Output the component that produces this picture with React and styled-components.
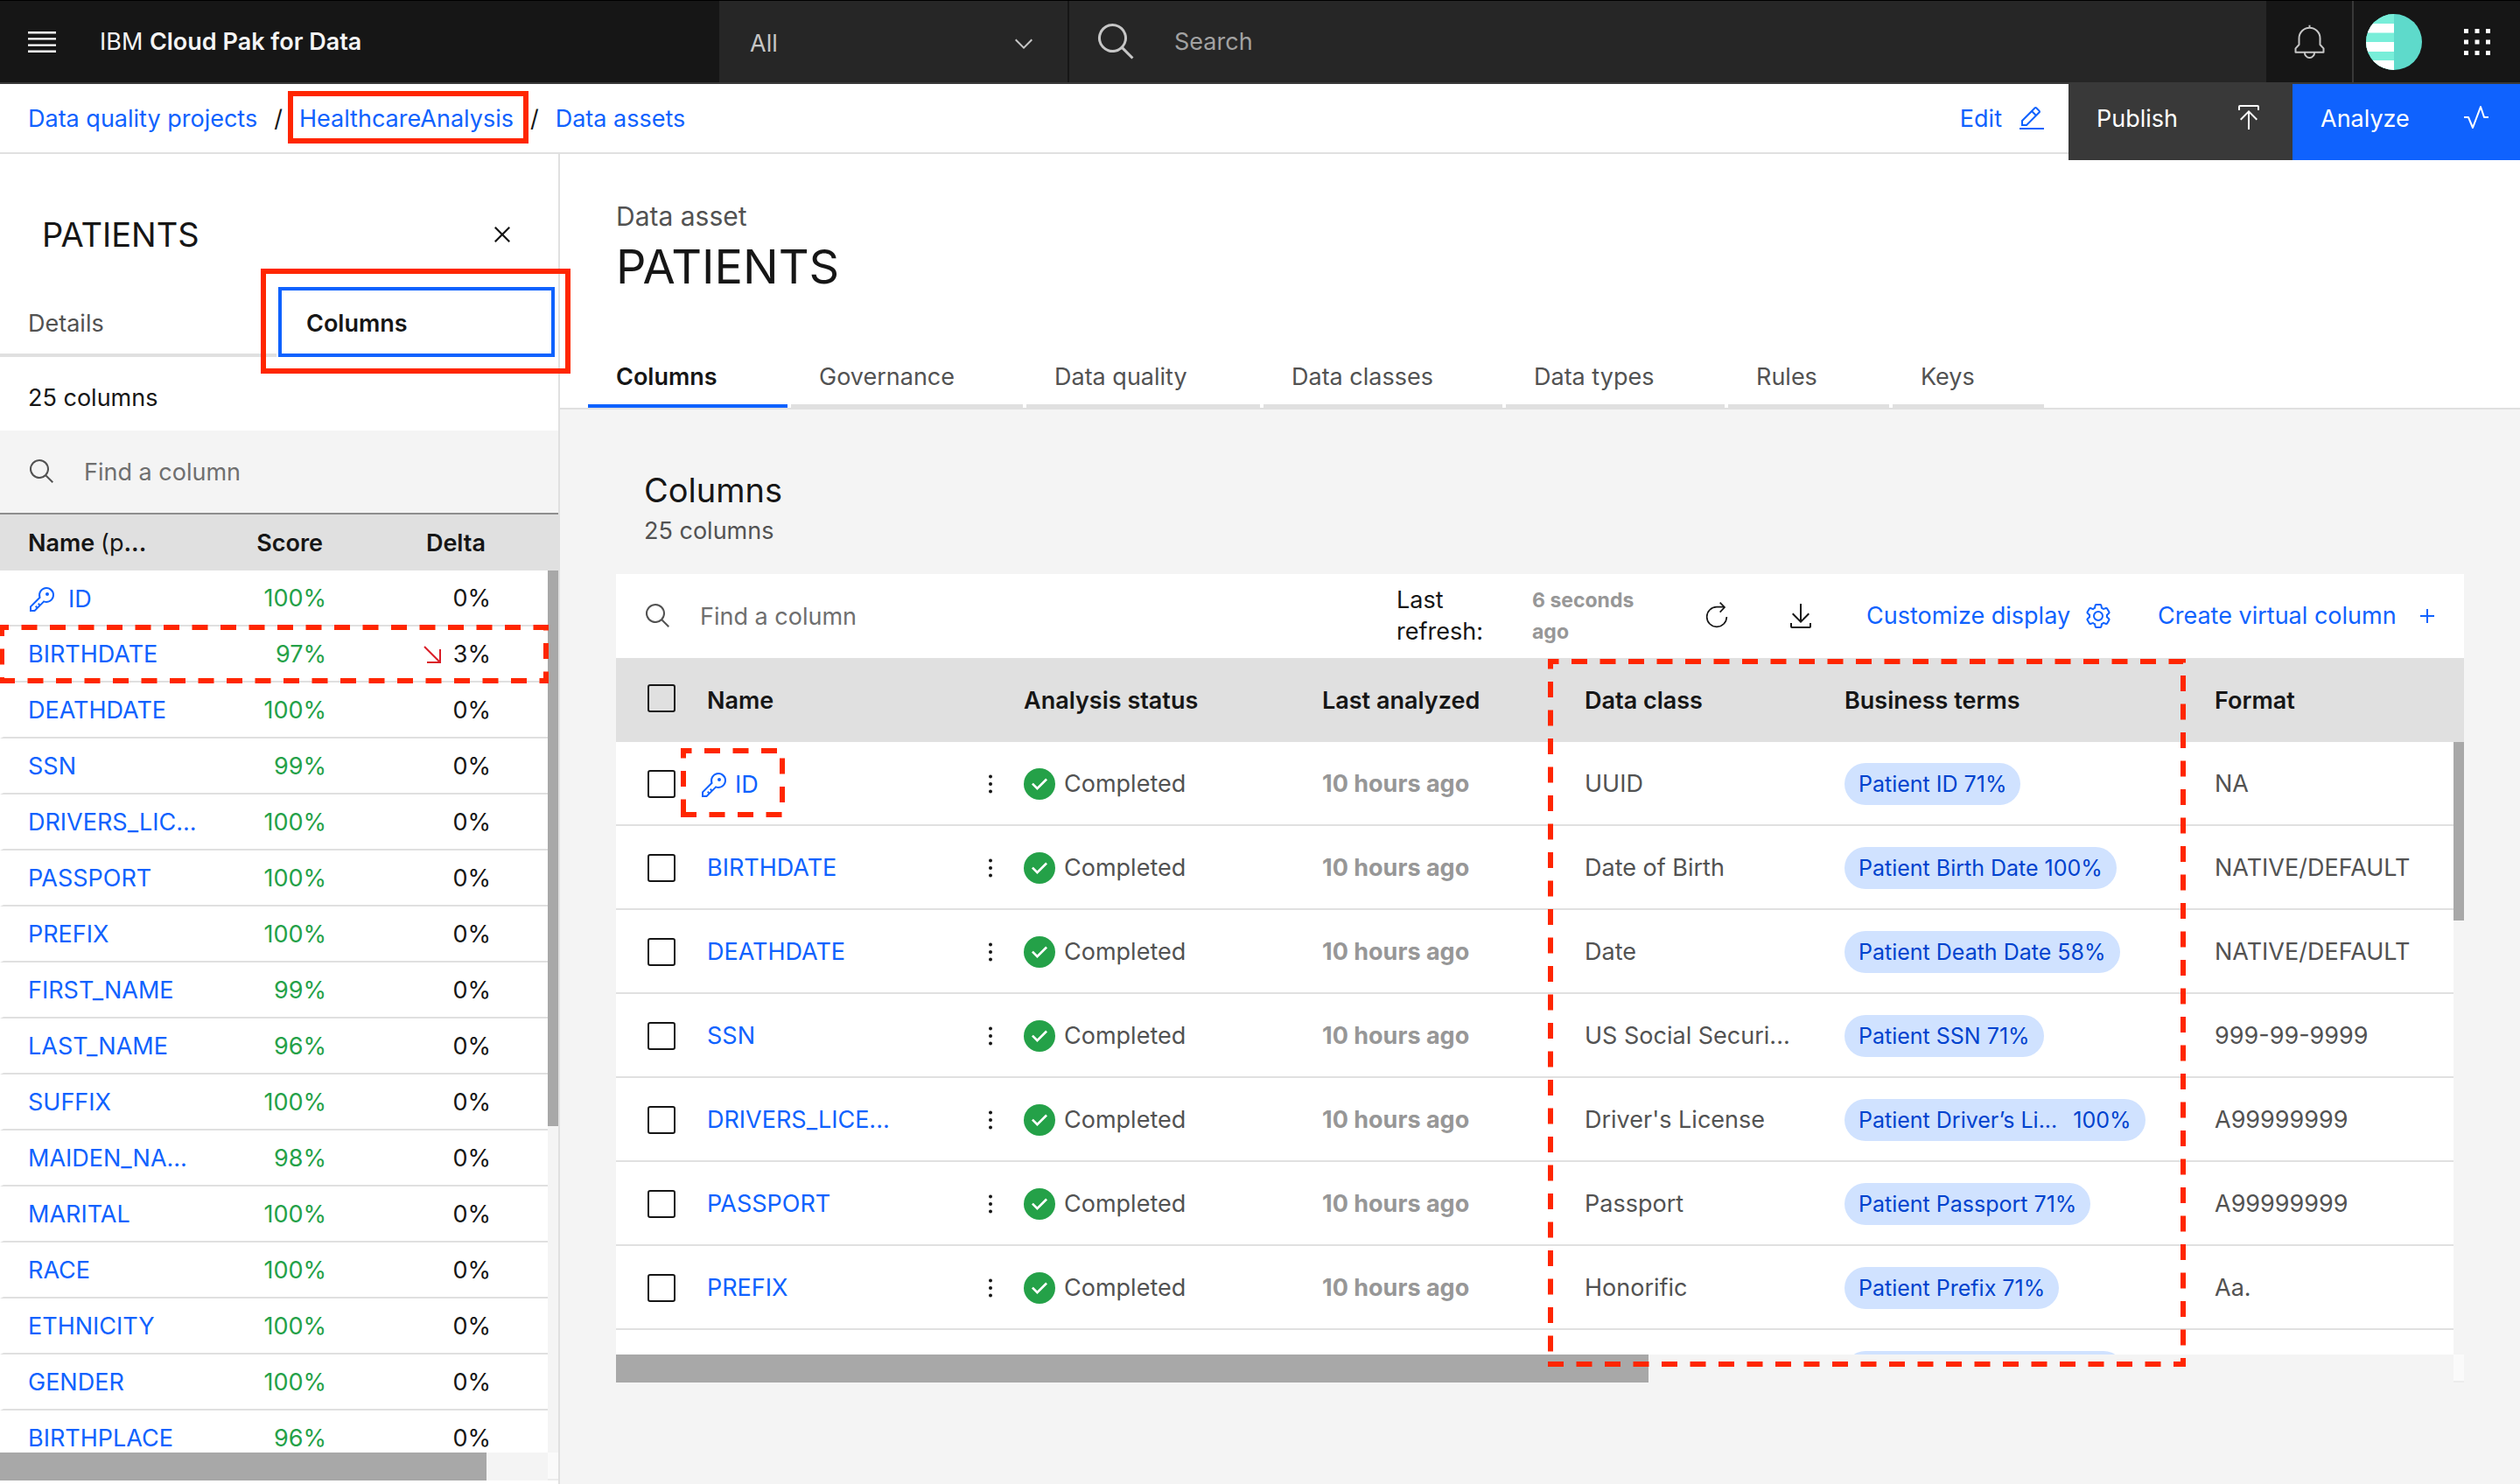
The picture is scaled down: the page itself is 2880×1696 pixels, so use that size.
import React from "react";
import styled, { createGlobalStyle } from "styled-components";

const c = {
  ink: "#161616",
  muted: "#525252",
  placeholder: "#6f6f6f",
  faded: "#979797",
  blue: "#0f62fe",
  green: "#24a148",
  line: "#e0e0e0",
  layer: "#f4f4f4",
  thumb: "#a8a8a8",
  mark: "#ff2600",
};

const Global = createGlobalStyle`
  *, *::before, *::after { box-sizing: border-box; }
  body { margin: 0; background: #fff; }
  button, input, select { font: inherit; color: inherit; border: 0; border-radius: 0; background: none; padding: 0; margin: 0; outline: none; }
  button { cursor: pointer; text-align: left; }
  a { color: ${c.blue}; text-decoration: none; }
  h1, h2, p { margin: 0; font-weight: 400; }
  svg { display: block; flex: none; }
`;

/* ---------- icons ---------- */

const paths = {
  search:
    "M29,27.5859l-7.5521-7.5521a11.0177,11.0177,0,1,0-1.4141,1.4141L27.5859,29ZM4,13a9,9,0,1,1,9,9A9.01,9.01,0,0,1,4,13Z",
  chevron: "M16 22L6 12 7.4 10.6 16 19.2 24.6 10.6 26 12z",
  edit:
    "M2 26H30V28H2zM25.4 9c.8-.8.8-2 0-2.8l-3.6-3.6c-.8-.8-2-.8-2.8 0l-15 15V24h6.4L25.4 9zM20.4 4L24 7.6l-3 3L17.4 7 20.4 4zM6 22v-3.6l10-10 3.6 3.6-10 10H6z",
  publish:
    "M6 18 7.41 19.41 15 11.83 15 30 17 30 17 11.83 24.59 19.41 26 18 16 8 6 18zM6,8V4H26V8h2V4a2,2,0,0,0-2-2H6A2,2,0,0,0,4,4V8Z",
  activity:
    "M12,29a1,1,0,0,1-.92-.62L6.33,17H2V15H7a1,1,0,0,1,.92.62L12,25.28,20.06,3.65A1,1,0,0,1,21,3a1,1,0,0,1,.93.68L25.72,15H30v2H25a1,1,0,0,1-.95-.68L21,7,12.94,28.35A1,1,0,0,1,12,29Z",
  close:
    "M24 9.4L22.6 8 16 14.6 9.4 8 8 9.4 14.6 16 8 22.6 9.4 24 16 17.4 22.6 24 24 22.6 17.4 16 24 9.4z",
  download:
    "M26,24v4H6V24H4v4a2,2,0,0,0,2,2H26a2,2,0,0,0,2-2V24ZM26 14 24.59 12.59 17 20.17 17 2 15 2 15 20.17 7.41 12.59 6 14 16 24 26 14z",
  add: "M17 15V8H15V15H8V17H15V24H17V17H24V15z",
  key:
    "M21,2a8.9977,8.9977,0,0,0-8.6119,11.6118L2,24v6H8L18.3881,19.6118A9,9,0,1,0,21,2Zm0,16a7.0125,7.0125,0,0,1-2.0322-.3022L17.821,17.35l-.8472.8472-3.1811,3.1812L12.4141,20,11,21.4141l1.3787,1.3786-1.5859,1.586L9.4141,23,8,24.4141l1.3787,1.3786L7.1716,28H4V24.8284l9.8023-9.8023.8472-.8474-.3473-1.1467A7,7,0,1,1,21,18ZM24,10a2,2,0,1,1-4,0a2,2,0,0,1,4,0Z",
  gear:
    "M27,16.76c0-.25,0-.5,0-.76s0-.51,0-.77l1.92-1.68A2,2,0,0,0,29.3,11L26.94,7a2,2,0,0,0-1.73-1,2,2,0,0,0-.64.1l-2.43.82a11.35,11.35,0,0,0-1.31-.75l-.51-2.52a2,2,0,0,0-2-1.61H13.64a2,2,0,0,0-2,1.61l-.51,2.52a11.48,11.48,0,0,0-1.32.75L7.43,6.06A2,2,0,0,0,6.79,6,2,2,0,0,0,5.06,7L2.7,11a2,2,0,0,0,.41,2.51L5,15.24c0,.25,0,.5,0,.76s0,.51,0,.77L3.11,18.45A2,2,0,0,0,2.7,21L5.06,25a2,2,0,0,0,1.73,1,2,2,0,0,0,.64-.1l2.43-.82a11.35,11.35,0,0,0,1.31.75l.51,2.52a2,2,0,0,0,2,1.61h4.72a2,2,0,0,0,2-1.61l.51-2.52a11.48,11.48,0,0,0,1.32-.75l2.42.82a2,2,0,0,0,.64.1,2,2,0,0,0,1.73-1L29.3,21a2,2,0,0,0-.41-2.51ZM25.21,24l-3.43-1.16a8.86,8.86,0,0,1-2.71,1.57L18.36,28H13.64l-.71-3.55a9.36,9.36,0,0,1-2.7-1.57L6.79,24,4.43,20l2.72-2.4a8.9,8.9,0,0,1,0-3.13L4.43,12,6.79,8l3.43,1.16a8.86,8.86,0,0,1,2.71-1.57L13.64,4h4.72l.71,3.55a9.36,9.36,0,0,1,2.7,1.57L25.21,8,27.57,12l-2.72,2.4a8.9,8.9,0,0,1,0,3.13L27.57,20ZM16,22a6,6,0,1,1,6-6A5.94,5.94,0,0,1,16,22Zm0-10a3.91,3.91,0,0,0-4,4,3.91,3.91,0,0,0,4,4,3.91,3.91,0,0,0,4-4A3.91,3.91,0,0,0,16,12Z",
};

const Icon = ({ name, size = 32 }) => (
  <svg width={size} height={size} viewBox="0 0 32 32" fill="currentColor" fillRule="evenodd" aria-hidden="true">
    <path d={paths[name]} />
  </svg>
);

const MenuIcon = () => (
  <svg width="32" height="24" viewBox="0 0 32 24" fill="#fff" aria-hidden="true">
    <path d="M0 0h32v2.4H0zM0 7.2h32v2.4H0zM0 14.4h32v2.4H0zM0 21.6h32V24H0z" />
  </svg>
);

const BellIcon = () => (
  <svg width="39" height="42" viewBox="0 0 116 126" fill="none" stroke="#c6c6c6" strokeWidth="6" aria-hidden="true">
    <path d="M58 5v9M22 72V50a36 36 0 0 1 72 0v22l12 13v13H10V85zM41 98a17 19 0 0 0 34 0" strokeLinejoin="round" />
  </svg>
);

const Avatar = () => (
  <svg width="64" height="64" viewBox="0 0 64 64" aria-hidden="true">
    <defs>
      <clipPath id="avatar">
        <circle cx="32" cy="32" r="32" />
      </clipPath>
    </defs>
    <g clipPath="url(#avatar)">
      <path fill="#5edacb" d="M0 0h64v64H0z" />
      <path fill="#78eed9" d="M0 0h32v64H0z" />
      <path fill="#fff" d="M0 11h32v10.500H0zM0 32h32v11H0zM0 53h32v11H0z" />
    </g>
  </svg>
);

const GridIcon = () => (
  <svg width="30" height="30" viewBox="0 0 30 30" fill="#fff" aria-hidden="true">
    {[0, 12.5, 25].map((y) => [0, 12.5, 25].map((x) => <rect key={`${x}-${y}`} x={x} y={y} width="5" height="5" />))}
  </svg>
);

const RefreshIcon = () => (
  <svg width="32" height="32" viewBox="0 0 96 96" fill="none" stroke="currentColor" strokeWidth="5" aria-hidden="true">
    <path d="M82 51A34 34 0 1 1 48 17H74M59 2L75 18 59 35" />
  </svg>
);

const DotsIcon = () => (
  <svg width="4" height="22" viewBox="0 0 4 22" fill={c.ink} aria-hidden="true">
    <circle cx="2" cy="2.500" r="2" />
    <circle cx="2" cy="11" r="2" />
    <circle cx="2" cy="19.500" r="2" />
  </svg>
);

const CheckIcon = () => (
  <svg width="36" height="36" viewBox="2 2 28 28" aria-hidden="true">
    <circle cx="16" cy="16" r="14" fill={c.green} />
    <path fill="#fff" d="M14 21.4142L9 16.4141 10.4141 15 14 18.5858 21.5859 11 23 12.4142z" />
  </svg>
);

const DownArrow = () => (
  <svg width="20" height="20" viewBox="0 0 20 20" fill="none" stroke="#da1e28" strokeWidth="2" aria-label="down">
    <path d="M1 1L18 18M19 4V19H4" />
  </svg>
);

/* ---------- page frame ---------- */

const Page = styled.div`
  display: flex;
  flex-direction: column;
  height: 100vh;
  overflow: hidden;
  font-family: Inter, "Liberation Sans", sans-serif;
  font-size: 27px;
  line-height: 36px;
  color: ${c.ink};
`;

const Header = styled.header`
  display: flex;
  flex: none;
  height: 96px;
  border-top: 1px solid #000;
  border-bottom: 2px solid #393939;
  background: ${c.ink};
`;

const Brand = styled.div`
  display: flex;
  align-items: center;
  gap: 50px;
  width: 822px;
  padding-left: 32px;
  color: #f4f4f4;
  strong { font-weight: 600; }
`;

const Scope = styled.label`
  display: grid;
  align-items: center;
  width: 400px;
  padding-top: 4px;
  background: #262626;
  border-right: 2px solid ${c.ink};
  color: #c6c6c6;
  & > * { grid-area: 1 / 1; }
  svg { justify-self: end; margin-right: 34px; pointer-events: none; }
  select { appearance: none; width: 100%; height: 60px; padding-left: 35px; }
`;

const GlobalSearch = styled.label`
  display: flex;
  align-items: center;
  flex: 1;
  gap: 42px;
  padding-left: 30px;
  background: #262626;
  color: #c6c6c6;
  input { flex: 1; }
  input::placeholder { color: #a2a2a2; opacity: 1; }
`;

const HeaderButton = styled.button`
  display: grid;
  place-items: center;
  width: ${(p) => p.$w}px;
  border-left: ${(p) => (p.$divided ? "2px solid #393939" : "0")};
`;

const SubBar = styled.div`
  display: flex;
  flex: none;
  align-items: flex-start;
  height: 80px;
  border-bottom: 2px solid ${c.line};
`;

const Crumbs = styled.nav`
  display: flex;
  flex: 1;
  align-items: center;
  gap: 19px;
  height: 78px;
  padding: 2px 0 0 32px;
`;

const Crumb = styled.a`
  position: relative;
`;

const EditButton = styled.button`
  display: flex;
  align-items: center;
  gap: 18px;
  height: 78px;
  padding: 2px 26px 0 0;
  color: ${c.blue};
`;

const ActionButton = styled.button`
  position: relative;
  display: flex;
  justify-content: space-between;
  width: ${(p) => p.$w}px;
  height: 87px;
  padding: 22px 34px 0 32px;
  background: ${(p) => (p.$primary ? c.blue : "#393939")};
  color: #fff;
`;

const Body = styled.div`
  display: flex;
  flex: 1;
  min-height: 0;
`;

/* ---------- marks over the page ---------- */

const SolidMark = styled.span`
  position: absolute;
  inset: ${(p) => p.$inset};
  border: 6px solid ${c.mark};
  pointer-events: none;
  z-index: 2;
`;

const DashSvg = styled.svg`
  position: absolute;
  left: ${(p) => p.$x}px;
  top: ${(p) => p.$y}px;
  overflow: visible;
  pointer-events: none;
  z-index: 3;
`;

const DashedMark = ({ x, y, w, h }) => (
  <DashSvg $x={x} $y={y} width={w} height={h} aria-hidden="true">
    <path
      d={`M0 ${h - 3}H${w - 3}V3H3V${h}`}
      fill="none"
      stroke={c.mark}
      strokeWidth="6"
      strokeDasharray="18 14.5"
    />
  </DashSvg>
);

/* ---------- side panel ---------- */

const Panel = styled.aside`
  display: flex;
  flex-direction: column;
  flex: none;
  width: 640px;
  padding-bottom: 4px;
  border-right: 2px solid ${c.line};
`;

const PanelHead = styled.div`
  display: flex;
  align-items: center;
  justify-content: space-between;
  flex: none;
  height: 152px;
  padding: 32px 46px 0 48px;
`;

const PanelTitle = styled.h2`
  font-size: 38px;
  line-height: 48px;
`;

const PanelTabs = styled.div`
  display: grid;
  grid-template-columns: 316px 316px;
  gap: 2px;
  flex: none;
  height: 80px;
`;

const PanelTab = styled.button`
  position: relative;
  padding: 4px 0 0 32px;
  color: ${(p) => (p.$active ? c.ink : c.muted)};
  font-weight: ${(p) => (p.$active ? 600 : 400)};
  box-shadow: ${(p) => (p.$active ? `inset 0 0 0 4px ${c.blue}` : `inset 0 -4px 0 ${c.line}`)};
`;

const PanelCount = styled.p`
  flex: none;
  height: 84px;
  padding: 29px 0 0 32px;
`;

const FindField = styled.label`
  display: flex;
  align-items: center;
  flex: none;
  gap: 32px;
  height: 96px;
  padding-left: 32px;
  color: ${c.muted};
  input { width: 400px; padding-top: 2px; }
  input::placeholder { color: ${c.placeholder}; opacity: 1; }
`;

const PanelFind = styled(FindField)`
  background: ${c.layer};
  border-bottom: 2px solid #8d8d8d;
`;

const PanelList = styled.div`
  position: relative;
  flex: 1;
  min-height: 0;
  overflow: hidden;
`;

const ScoreTable = styled.table`
  width: 100%;
  table-layout: fixed;
  border-collapse: separate;
  border-spacing: 0;
  th, td { height: 64px; padding: 2px 0 0; text-align: right; white-space: nowrap; font-weight: 400; }
  thead th { background: ${c.line}; font-weight: 600; padding-right: 83px; }
  thead th:first-child { text-align: left; padding: 2px 0 0 32px; }
  thead th:nth-child(2) { padding-right: 4px; }
  thead span { font-weight: 400; }
  tbody th, tbody td { border-bottom: 2px solid ${c.line}; }
  tbody th { text-align: left; border-left: 4px solid #fff; padding-left: 28px; }
  tbody td:nth-child(2) { color: ${c.green}; }
  tbody td:last-child { padding-right: 77px; }
`;

const Delta = styled.span`
  display: inline-flex;
  align-items: center;
  gap: 14px;
`;

const KeyLink = styled.a`
  position: relative;
  display: inline-flex;
  align-items: center;
  gap: ${(p) => (p.$compact ? 8 : 14)}px;
  margin-left: ${(p) => (p.$compact ? -8 : 0)}px;
  vertical-align: middle;
`;

const VTrack = styled.div`
  position: absolute;
  top: ${(p) => p.$top}px;
  right: 0;
  bottom: 0;
  width: 12px;
  background: ${c.layer};
`;

const VThumb = styled.div`
  height: ${(p) => p.$h}px;
  background: ${c.thumb};
`;

const HTrack = styled.div`
  display: flex;
  flex: none;
  height: 32px;
  background: ${c.layer};
`;

const HThumb = styled.div`
  width: ${(p) => p.$w}px;
  background: ${c.thumb};
`;

const Corner = styled.div`
  width: 12px;
  margin-left: auto;
  background: #fafafa;
  border-bottom: 2px solid #ececec;
`;

/* ---------- main ---------- */

const Main = styled.main`
  flex: 1;
  min-width: 0;
  background: ${c.layer};
`;

const Hero = styled.div`
  padding: 51px 32px 0;
  background: #fff;
  border-bottom: 2px solid ${c.line};
`;

const Kind = styled.p`
  padding-left: 32px;
  font-size: 30px;
  line-height: 40px;
  color: ${c.muted};
`;

const Title = styled.h1`
  padding-left: 32px;
  font-size: 54px;
  line-height: 76px;
`;

const Tabs = styled.div`
  display: flex;
  gap: 4px;
  margin-top: 55px;
`;

const Tab = styled.button`
  width: ${(p) => p.$w}px;
  height: 68px;
  padding: 2px 0 0 32px;
  white-space: nowrap;
  border-bottom: 4px solid ${(p) => (p.$active ? c.blue : c.line)};
  color: ${(p) => (p.$active ? c.ink : c.muted)};
  font-weight: ${(p) => (p.$active ? 600 : 400)};
`;

const Section = styled.section`
  padding: 68px 64px 0;
`;

const SectionTitle = styled.h2`
  padding-left: 32px;
  font-size: 38px;
  line-height: 48px;
`;

const SectionCount = styled.p`
  margin: 5px 0 31px;
  padding-left: 32px;
  color: ${c.muted};
`;

const Card = styled.div`
  position: relative;
  background: #fff;
`;

const Toolbar = styled.div`
  display: grid;
  grid-template-columns: 1fr 155px 195px 96px 91px 333px 350px;
  align-items: center;
  height: 96px;
`;

const RefreshLabel = styled.span`
  width: 110px;
`;

const RefreshTime = styled.span`
  width: 130px;
  font-size: 23px;
  font-weight: 700;
  color: ${c.faded};
`;

const IconButton = styled.button`
  display: block;
  justify-self: start;
`;

const LinkButton = styled.button`
  display: flex;
  align-items: center;
  justify-content: space-between;
  width: ${(p) => p.$w}px;
  white-space: nowrap;
  color: ${c.blue};
`;

const TableArea = styled.div`
  position: relative;
  height: 796px;
  overflow: hidden;
`;

const DataTable = styled.table`
  width: 100%;
  table-layout: fixed;
  border-collapse: separate;
  border-spacing: 0;
  th, td { height: 96px; padding: 2px 0 0; text-align: left; font-weight: 400; white-space: nowrap; }
  thead th { background: ${c.line}; font-weight: 600; }
  thead th:first-child { padding: 0 0 4px; }
  tbody th, tbody td { border-bottom: 2px solid ${c.line}; color: ${c.muted}; }
`;

const Check = styled.input`
  appearance: none;
  display: block;
  width: 32px;
  height: 32px;
  margin-left: 36px;
  border: 2px solid ${c.ink};
  border-radius: 3px;
`;

const Status = styled.span`
  display: flex;
  align-items: center;
  gap: 10px;
`;

const Ago = styled.span`
  font-weight: 700;
  color: ${c.faded};
`;

const Pill = styled.span`
  display: inline-flex;
  align-items: center;
  gap: 18px;
  height: 48px;
  min-width: ${(p) => p.$min || 0}px;
  padding: 0 16px;
  border-radius: 24px;
  background: #d0e2ff;
  color: #0043ce;
  font-size: 25px;
  vertical-align: middle;
`;

/* ---------- data ---------- */

const scores = [
  ["ID", 100, 0],
  ["BIRTHDATE", 97, 3],
  ["DEATHDATE", 100, 0],
  ["SSN", 99, 0],
  ["DRIVERS_LIC...", 100, 0],
  ["PASSPORT", 100, 0],
  ["PREFIX", 100, 0],
  ["FIRST_NAME", 99, 0],
  ["LAST_NAME", 96, 0],
  ["SUFFIX", 100, 0],
  ["MAIDEN_NA...", 98, 0],
  ["MARITAL", 100, 0],
  ["RACE", 100, 0],
  ["ETHNICITY", 100, 0],
  ["GENDER", 100, 0],
  ["BIRTHPLACE", 96, 0],
];

const tabs = [
  ["Columns", 228],
  ["Governance", 265],
  ["Data quality", 267],
  ["Data classes", 273],
  ["Data types", 250],
  ["Rules", 184],
  ["Keys", 173],
];

const rows = [
  ["ID", "UUID", ["Patient ID 71%"], "NA"],
  ["BIRTHDATE", "Date of Birth", ["Patient Birth Date 100%"], "NATIVE/DEFAULT"],
  ["DEATHDATE", "Date", ["Patient Death Date 58%"], "NATIVE/DEFAULT"],
  ["SSN", "US Social Securi...", ["Patient SSN 71%"], "999-99-9999"],
  ["DRIVERS_LICE...", "Driver's License", ["Patient Driver’s Li...", "100%"], "A99999999"],
  ["PASSPORT", "Passport", ["Patient Passport 71%"], "A99999999"],
  ["PREFIX", "Honorific", ["Patient Prefix 71%"], "Aa."],
];

const SidePanel = () => (
  <Panel>
    <PanelHead>
      <PanelTitle>PATIENTS</PanelTitle>
      <button aria-label="Close">
        <Icon name="close" size={36} />
      </button>
    </PanelHead>
    <PanelTabs>
      <PanelTab>Details</PanelTab>
      <PanelTab $active>
        Columns
        <SolidMark $inset="-21px -18px -19px -20px" />
      </PanelTab>
    </PanelTabs>
    <PanelCount>25 columns</PanelCount>
    <PanelFind>
      <Icon name="search" />
      <input type="text" placeholder="Find a column" aria-label="Find a column" />
    </PanelFind>
    <PanelList>
      <ScoreTable>
        <colgroup>
          <col />
          <col style={{ width: 100 }} />
          <col style={{ width: 265 }} />
        </colgroup>
        <thead>
          <tr>
            <th>
              Name <span>(p</span>...
            </th>
            <th>Score</th>
            <th>Delta</th>
          </tr>
        </thead>
        <tbody>
          {scores.map(([name, score, delta]) => (
            <tr key={name}>
              <th scope="row">
                {name === "ID" ? (
                  <KeyLink href="#id">
                    <Icon name="key" />
                    {name}
                  </KeyLink>
                ) : (
                  <a href={`#${name}`}>{name}</a>
                )}
              </th>
              <td>{score}%</td>
              <td>
                <Delta>
                  {delta > 0 && <DownArrow />}
                  {delta}%
                </Delta>
              </td>
            </tr>
          ))}
        </tbody>
      </ScoreTable>
      <VTrack $top={64}>
        <VThumb $h={635} />
      </VTrack>
      <DashedMark x={-1} y={126} w={628} h={67} />
    </PanelList>
    <HTrack>
      <HThumb $w={556} />
      <Corner />
    </HTrack>
  </Panel>
);

const ColumnsCard = () => (
  <Card>
    <Toolbar>
      <FindField>
        <Icon name="search" />
        <input type="text" placeholder="Find a column" aria-label="Find a column in the table" />
      </FindField>
      <RefreshLabel>Last refresh:</RefreshLabel>
      <RefreshTime>6 seconds ago</RefreshTime>
      <IconButton aria-label="Refresh">
        <RefreshIcon />
      </IconButton>
      <IconButton aria-label="Download">
        <Icon name="download" />
      </IconButton>
      <LinkButton $w={281}>
        Customize display
        <Icon name="gear" />
      </LinkButton>
      <LinkButton $w={324}>
        Create virtual column
        <Icon name="add" />
      </LinkButton>
    </Toolbar>
    <TableArea>
      <DataTable>
        <colgroup>
          <col style={{ width: 104 }} />
          <col style={{ width: 322 }} />
          <col style={{ width: 40 }} />
          <col style={{ width: 341 }} />
          <col style={{ width: 300 }} />
          <col style={{ width: 297 }} />
          <col style={{ width: 423 }} />
          <col />
        </colgroup>
        <thead>
          <tr>
            <th>
              <Check type="checkbox" aria-label="Select all" />
            </th>
            <th colSpan={2}>Name</th>
            <th>Analysis status</th>
            <th>Last analyzed</th>
            <th>Data class</th>
            <th>Business terms</th>
            <th>Format</th>
          </tr>
        </thead>
        <tbody>
          {rows.map(([name, dataClass, term, format]) => (
            <tr key={name}>
              <td>
                <Check type="checkbox" aria-label={`Select ${name}`} />
              </td>
              <th scope="row">
                {name === "ID" ? (
                  <KeyLink href="#id" $compact>
                    <Icon name="key" />
                    {name}
                    <DashedMark x={-22} y={-24} w={119} h={79} />
                  </KeyLink>
                ) : (
                  <a href={`#${name}`}>{name}</a>
                )}
              </th>
              <td>
                <IconButton aria-label="More actions">
                  <DotsIcon />
                </IconButton>
              </td>
              <td>
                <Status>
                  <CheckIcon />
                  Completed
                </Status>
              </td>
              <td>
                <Ago>10 hours ago</Ago>
              </td>
              <td>{dataClass}</td>
              <td>
                <Pill>
                  {term.map((part) => (
                    <span key={part}>{part}</span>
                  ))}
                </Pill>
              </td>
              <td>{format}</td>
            </tr>
          ))}
          <tr>
            <td colSpan={6} />
            <td>
              <Pill $min={320} />
            </td>
            <td />
          </tr>
        </tbody>
      </DataTable>
      <VTrack $top={96}>
        <VThumb $h={204} />
      </VTrack>
    </TableArea>
    <HTrack>
      <HThumb $w={1180} />
      <Corner />
    </HTrack>
    <DashedMark x={1065} y={97} w={729} h={809} />
  </Card>
);

export default function App() {
  return (
    <Page>
      <Global />
      <Header>
        <Brand>
          <button aria-label="Menu">
            <MenuIcon />
          </button>
          <span>
            IBM <strong>Cloud Pak for Data</strong>
          </span>
        </Brand>
        <Scope>
          <select aria-label="Search scope" defaultValue="All">
            <option>All</option>
          </select>
          <Icon name="chevron" />
        </Scope>
        <GlobalSearch>
          <Icon name="search" size={48} />
          <input type="text" placeholder="Search" aria-label="Search" />
        </GlobalSearch>
        <HeaderButton $w={98} aria-label="Notifications">
          <BellIcon />
        </HeaderButton>
        <HeaderButton $w={94} $divided aria-label="Account">
          <Avatar />
        </HeaderButton>
        <HeaderButton $w={98} aria-label="App switcher">
          <GridIcon />
        </HeaderButton>
      </Header>
      <SubBar>
        <Crumbs aria-label="Breadcrumb">
          <Crumb href="#projects">Data quality projects</Crumb>
          <span>/</span>
          <Crumb href="#healthcare">
            HealthcareAnalysis
            <SolidMark $inset="-14px -17px -10px -13px" />
          </Crumb>
          <span>/</span>
          <Crumb href="#assets">Data assets</Crumb>
        </Crumbs>
        <EditButton>
          Edit
          <Icon name="edit" />
        </EditButton>
        <ActionButton $w={256}>
          Publish
          <Icon name="publish" />
        </ActionButton>
        <ActionButton $w={260} $primary>
          Analyze
          <Icon name="activity" />
        </ActionButton>
      </SubBar>
      <Body>
        <SidePanel />
        <Main>
          <Hero>
            <Kind>Data asset</Kind>
            <Title>PATIENTS</Title>
            <Tabs>
              {tabs.map(([label, w], i) => (
                <Tab key={label} $w={w} $active={i === 0}>
                  {label}
                </Tab>
              ))}
            </Tabs>
          </Hero>
          <Section>
            <SectionTitle>Columns</SectionTitle>
            <SectionCount>25 columns</SectionCount>
            <ColumnsCard />
          </Section>
        </Main>
      </Body>
    </Page>
  );
}
